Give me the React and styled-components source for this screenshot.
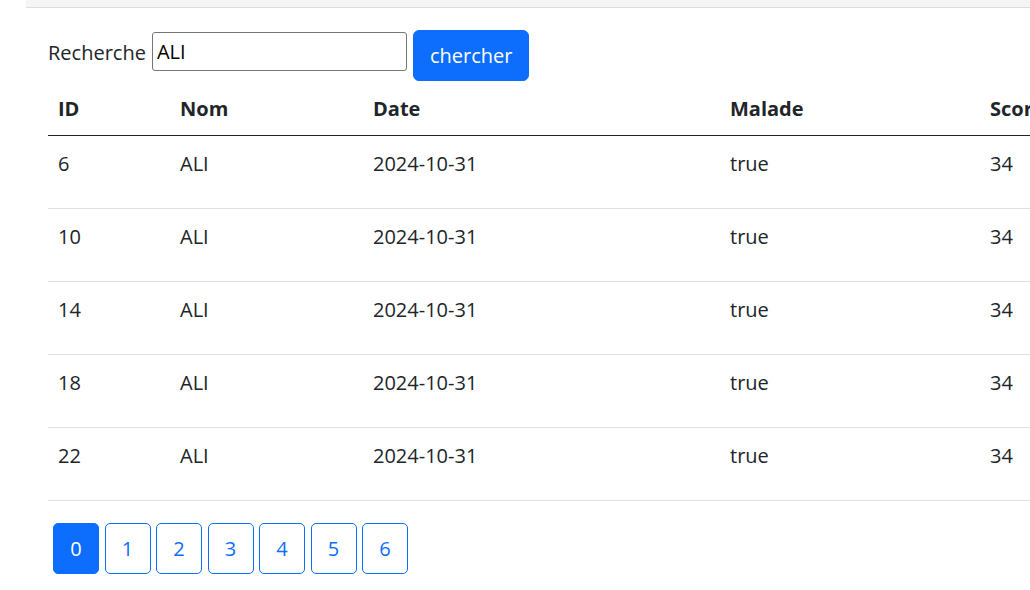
import React, { useState } from "react";
import styled, { createGlobalStyle } from "styled-components";

const GlobalStyle = createGlobalStyle`
  html, body {
    margin: 0;
    padding: 0;
    background: #fff;
    overflow: hidden;
  }
  body {
    font-family: "Open Sans", "Noto Sans", "Liberation Sans", sans-serif;
    font-size: 20px;
    line-height: 1.5;
    color: #212529;
  }
`;

const TopStrip = styled.div`
  margin-left: 26px;
  height: 7px;
  background: #f5f5f5;
  border-bottom: 1px solid #dcdcdc;
`;

const Main = styled.main`
  padding: 22px 0 0 48px;
  overflow: hidden;
`;

const SearchRow = styled.form`
  display: flex;
  align-items: flex-start;
  height: 55px;
`;

const Label = styled.label`
  padding-top: 8px;
  margin-right: 6px;
  line-height: 30px;
`;

const SearchInput = styled.input`
  box-sizing: border-box;
  width: 255px;
  height: 39px;
  margin-top: 2px;
  padding: 1px 4px;
  border: 1px solid #767676;
  border-radius: 3px;
  font-family: inherit;
  font-size: 20px;
  color: #000;
  outline: none;
`;

const Button = styled.button`
  box-sizing: border-box;
  height: 51px;
  padding: 0 16px;
  margin-left: 6px;
  border: 1px solid #0d6efd;
  border-radius: 6px;
  background: ${(p) => (p.$active || p.$solid ? "#0d6efd" : "#fff")};
  color: ${(p) => (p.$active || p.$solid ? "#fff" : "#0d6efd")};
  font-family: inherit;
  font-size: 20px;
  line-height: 30px;
  cursor: pointer;
`;

const Table = styled.table`
  width: 1500px;
  border-collapse: collapse;
  table-layout: fixed;
`;

const Th = styled.th`
  box-sizing: border-box;
  text-align: left;
  font-weight: 700;
  padding: 9px 10px 11px;
  line-height: 30px;
  border-bottom: 1px solid #212529;
  width: ${(p) => p.$w}px;
`;

const Td = styled.td`
  padding: 13px 10px 29px;
  line-height: 30px;
  vertical-align: top;
  border-bottom: 1px solid #dee2e6;
`;

const Pager = styled.div`
  display: flex;
  gap: 5.5px;
  padding: 22px 0 0 5px;
`;

const PageButton = styled(Button)`
  width: 46px;
  padding: 0;
  margin-left: 0;
  border-radius: 5px;
`;

const columns = [
  { key: "id", label: "ID", w: 122 },
  { key: "nom", label: "Nom", w: 193 },
  { key: "date", label: "Date", w: 357 },
  { key: "malade", label: "Malade", w: 260 },
  { key: "score", label: "Score", w: 260 },
  { key: "actions", label: "Actions", w: 308 },
];

const rows = [6, 10, 14, 18, 22].map((id) => ({
  id,
  nom: "ALI",
  date: "2024-10-31",
  malade: "true",
  score: 34,
  actions: "",
}));

export default function App() {
  const [keyword, setKeyword] = useState("ALI");
  const [page, setPage] = useState(0);

  return (
    <>
      <GlobalStyle />
      <TopStrip />
      <Main>
        <SearchRow onSubmit={(e) => e.preventDefault()}>
          <Label htmlFor="kw">Recherche</Label>
          <SearchInput
            id="kw"
            value={keyword}
            onChange={(e) => setKeyword(e.target.value)}
          />
          <Button $solid type="submit">
            chercher
          </Button>
        </SearchRow>
        <Table>
          <thead>
            <tr>
              {columns.map((c) => (
                <Th key={c.key} $w={c.w}>
                  {c.label}
                </Th>
              ))}
            </tr>
          </thead>
          <tbody>
            {rows.map((r) => (
              <tr key={r.id}>
                {columns.map((c) => (
                  <Td key={c.key}>{r[c.key]}</Td>
                ))}
              </tr>
            ))}
          </tbody>
        </Table>
        <Pager>
          {[0, 1, 2, 3, 4, 5, 6].map((p) => (
            <PageButton key={p} $active={p === page} onClick={() => setPage(p)}>
              {p}
            </PageButton>
          ))}
        </Pager>
      </Main>
    </>
  );
}
